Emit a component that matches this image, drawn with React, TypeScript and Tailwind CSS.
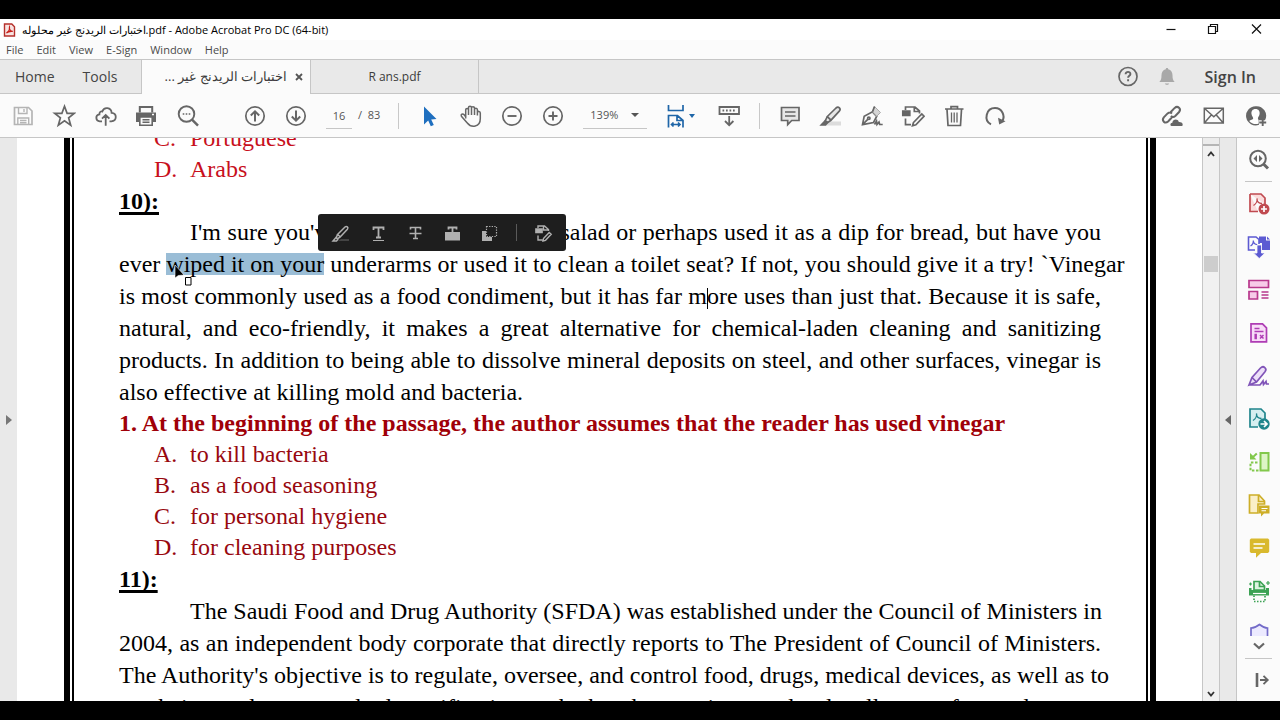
import React, { useState } from 'react'
import { clsx } from 'clsx'

type IconProps = { children: React.ReactNode; className?: string }

function Icon({ children, className }: IconProps) {
    return (
        <svg
            viewBox="0 0 24 24"
            fill="none"
            stroke="currentColor"
            strokeWidth={1.7}
            className={clsx('h-6 w-6 shrink-0', className)}
            aria-hidden="true"
        >
            {children}
        </svg>
    )
}

function IconButton({ label, children, className }: IconProps & { label: string }) {
    return (
        <button type="button" aria-label={label} className={clsx('flex h-6 w-6 shrink-0 items-center justify-center', className)}>
            <Icon>{children}</Icon>
        </button>
    )
}

function Separator() {
    return <div className="h-[26px] w-px shrink-0 bg-[#c8c8c8]" />
}

function TitleBar() {
    return (
        <header className="flex h-[21px] shrink-0 items-center bg-white pl-[3px] text-black">
            <svg viewBox="0 0 13 14" className="h-[14px] w-[13px]" fill="none" aria-hidden="true">
                <path d="M1.5 1h7.3l2.700 2.800V13h-10z" fill="#f8e4e2" stroke="#b5302b" strokeWidth="1.400" />
                <path d="M3.400 10c2.200-1.200 3.400-4 3.100-6-.8 2 1 4.300 3.300 4.400-2-.3-4.600.1-6.400 1.600z" stroke="#c8201a" strokeWidth="1.200" />
            </svg>
            <h1 className="ml-1.5 mt-px text-[11px] leading-5">اختبارات الريدنج غير محلوله.pdf - Adobe Acrobat Pro DC (64-bit)</h1>
            <div className="ml-auto flex items-center gap-[19px] pr-3">
                <IconButton label="Minimize">
                    <path d="M8.500 11.500h9" stroke="#111" strokeWidth="1.200" />
                </IconButton>
                <IconButton label="Restore">
                    <path d="M7.500 8.500h7v7h-7zM9.500 8.500v-2h7v7h-2" stroke="#111" strokeWidth="1.200" />
                </IconButton>
                <IconButton label="Close">
                    <path d="M8 6.500l9 9M17 6.500l-9 9" stroke="#111" strokeWidth="1.200" />
                </IconButton>
            </div>
        </header>
    )
}

const menus = ['File', 'Edit', 'View', 'E-Sign', 'Window', 'Help']

function MenuBar() {
    return (
        <nav className="flex h-5 shrink-0 items-center gap-[13px] border-b border-[#c6c6c6] bg-[#fbfbfb] pl-[6px] text-[11px] leading-4 text-[#4a4a4a]">
            {menus.map((m) => (
                <button key={m} type="button">{m}</button>
            ))}
        </nav>
    )
}

function TabBar() {
    return (
        <div className="flex h-[34px] shrink-0 items-stretch bg-[#e9e9e9] text-[#3c3c3c]">
            <div className="flex w-[142px] items-center gap-7 border-r border-b border-[#c6c6c6] pl-[15px] text-[14px] text-[#444]">
                <button type="button">Home</button>
                <button type="button">Tools</button>
            </div>
            <div className="flex w-[169px] items-center justify-end border-r border-[#c6c6c6] bg-[#fbfbfb] pr-[7px] text-[13px]">
                <button type="button" dir="rtl">اختبارات الريدنج غير ...</button>
                <button type="button" aria-label="Close tab" className="ml-2">
                    <svg viewBox="0 0 8 8" className="h-2 w-2" aria-hidden="true">
                        <path d="M1 1l6 6M7 1L1 7" stroke="#555" strokeWidth="1.800" />
                    </svg>
                </button>
            </div>
            <button type="button" className="w-[168px] border-r border-b border-[#c6c6c6] text-[12px]">R ans.pdf</button>
            <div className="flex flex-1 items-center justify-end border-b border-[#c6c6c6] pr-6">
                <IconButton label="Help" className="text-[#666]">
                    <circle cx="12" cy="11.500" r="9" />
                    <path d="M9.600 9.300c0-3.300 5-3 4.800-.2-.1 1.700-2.300 1.700-2.300 3.700M12.100 14.300v2" strokeWidth="1.900" />
                </IconButton>
                <IconButton label="Notifications" className="ml-[15px] text-[#a8a8a8]">
                    <path d="M12 3c.8 0 1.200.5 1.200 1.200 3 .7 4.300 3 4.300 6 0 3.500.5 5 2.200 6.800H4.300c1.700-1.800 2.200-3.300 2.200-6.800 0-3 1.300-5.300 4.300-6 0-.7.400-1.200 1.200-1.200zM9.800 18.500h4.400c-.5 1.800-3.900 1.800-4.400 0z" fill="currentColor" stroke="none" />
                </IconButton>
                <button type="button" className="ml-[26px] text-[16px] font-semibold text-[#444]">Sign In</button>
            </div>
        </div>
    )
}

function Toolbar() {
    const [page, setPage] = useState('16')

    return (
        <div className="flex h-[44px] shrink-0 items-center border-b border-[#c6c6c6] bg-[#fbfbfb] pr-3 pl-[11px] text-[#666]">
            <div className="flex gap-[17px]">
                <IconButton label="Save" className="text-[#b4b4b4]">
                    <path d="M3.500 3.500h14l3.500 3.500v13.500H3.500z" />
                    <path d="M7.500 3.500v6h8.500v-6M13 5v3M6.800 20.500v-6.500h10.900v6.500M9 16.500h6.500M9 18.700h6.500" strokeWidth="1.400" />
                </IconButton>
                <IconButton label="Star">
                    <path d="M12.500 2.300l2.600 7h7.200l-5.700 4.500 2.100 7.400-6.200-4.300-6.200 4.300 2.100-7.400L2.700 9.300h7.200z" />
                </IconButton>
                <IconButton label="Upload">
                    <path d="M9 17.300H6.800c-4.400-.3-4.700-6.200-.4-6.900-.2-2.200 1.500-3.400 2.900-2.900 1.700-5 9-4.300 9.300 1.300 5.600.2 5.600 8.300-.3 8.500H16.500M12.700 21.700v-10M9 14.700l3.700-3.700 3.700 3.700" strokeWidth="1.800" />
                </IconButton>
                <IconButton label="Print">
                    <path d="M2 8.500h20v9.500h-3.500v-4h-13v4H2z" fill="currentColor" stroke="none" />
                    <path d="M5.800 8.500v-5.600h12.400v5.600" strokeWidth="2" />
                    <path d="M5.800 13h12.400v8.200H5.800z" fill="#fbfbfb" strokeWidth="1.600" />
                    <path d="M8.500 15.800h7M8.500 18.300h7" strokeWidth="1.500" />
                    <path d="M18 10.500h2" stroke="#fff" strokeWidth="1.300" />
                </IconButton>
                <IconButton label="Find">
                    <circle cx="11.500" cy="10" r="7.800" strokeWidth="1.900" />
                    <path d="M17 15.700l6 6" strokeWidth="2.500" />
                    <path d="M7.700 10h1.600M10.700 10h1.600M13.700 10h1.600" strokeWidth="1.600" />
                </IconButton>
            </div>
            <div className="ml-[44px] flex gap-[17px]">
                <IconButton label="Previous page">
                    <circle cx="12" cy="12" r="9.200" />
                    <path d="M12 17.500V7.500M7.800 11.500L12 7.300l4.200 4.200" strokeWidth="2" />
                </IconButton>
                <IconButton label="Next page">
                    <circle cx="12" cy="12" r="9.200" />
                    <path d="M12 6.500v10M7.800 12.500l4.200 4.200 4.200-4.200" strokeWidth="2" />
                </IconButton>
            </div>
            <label className="ml-[18px] flex items-center text-[11px] text-[#555]">
                <input
                    aria-label="Page number"
                    value={page}
                    onChange={(e) => setPage(e.target.value)}
                    className="h-[26px] w-[26px] border-b border-[#c6c6c6] bg-transparent text-center outline-none"
                />
                <span className="ml-[6px]">/&nbsp; 83</span>
            </label>
            <div className="ml-[18px]"><Separator /></div>
            <div className="ml-[19px] flex gap-[17px]">
                <IconButton label="Select" className="text-[#1f6fbf]">
                    <path d="M6 2.500v18l4.200-4 2.600 5.800 3-1.300-2.600-5.600 5.300-.3z" fill="currentColor" stroke="none" />
                </IconButton>
                <IconButton label="Pan">
                    <path d="M6.700 14.500V5.800c0-1.800 2.800-1.800 2.800 0V11M9.500 6V3.500c0-1.800 3-1.800 3 0V11M12.500 4c0-1.800 3-1.700 3 .2V11M15.500 5.500c0-1.700 2.900-1.600 2.900.3V11.500M18.400 8.500c.2-1.600 2.900-1.500 2.900.4v5.600c0 9.300-9.300 9.400-13 4.500L2.400 12.200c-1-1.700 1.300-3 2.500-1.600l2.400 3" strokeWidth="1.500" />
                </IconButton>
                <IconButton label="Zoom out">
                    <circle cx="12" cy="12" r="9.200" />
                    <path d="M7.500 12h9" strokeWidth="1.900" />
                </IconButton>
                <IconButton label="Zoom in">
                    <circle cx="12" cy="12" r="9.200" />
                    <path d="M7.500 12h9M12 7.500v9" strokeWidth="1.900" />
                </IconButton>
            </div>
            <label className="relative ml-[18px] flex h-[26px] w-[64px] shrink-0 items-center border-b border-[#c6c6c6] text-[11px] text-[#555]">
                <select aria-label="Zoom level" defaultValue="139%" className="w-full appearance-none bg-transparent pl-[7px] outline-none">
                    <option>100%</option>
                    <option>139%</option>
                    <option>200%</option>
                </select>
                <svg viewBox="0 0 8 4" className="pointer-events-none absolute right-2 h-1 w-2" aria-hidden="true">
                    <path d="M0 0h8L4 4z" fill="#555" />
                </svg>
            </label>
            <button type="button" aria-label="Fit width" className="ml-[17px] flex items-center text-[#1f66a8]">
                <Icon>
                    <path d="M4.500 1v5.500h14.500V1M4.500 23.500V11.500h9l5.500 5v7M13 11.500v5h6M7.500 20.500h8.500M9.500 18.500l-2 2 2 2M14 18.500l2 2-2 2" strokeWidth="1.700" />
                </Icon>
                <svg viewBox="0 0 8 4" className="h-1 w-2" aria-hidden="true">
                    <path d="M1 0h6L4 4z" fill="currentColor" />
                </svg>
            </button>
            <IconButton label="Read mode" className="ml-[21px]">
                <path d="M2.500 3h19.500v7H2.500zM12.200 12v8.500M8 17l4.200 4.200 4.200-4.200" strokeWidth="1.800" />
                <path d="M5.500 6.500h1.700M9 6.500h1.700M12.500 6.500h1.700M16 6.500h1.700" strokeWidth="1.800" />
            </IconButton>
            <div className="ml-[18px]"><Separator /></div>
            <div className="ml-[18px] flex gap-[17px]">
                <IconButton label="Comment">
                    <path d="M3.500 3.500h17.500v13h-7.300l-4 4.200v-4.200H3.500z" fill="#e6e6e6" />
                    <path d="M7 8h10.500M7 12h10.500" strokeWidth="1.400" />
                </IconButton>
                <IconButton label="Highlight">
                    <path d="M10 17.500h12v4H6z" fill="#dcdcdc" stroke="none" />
                    <path d="M8.300 12.500L17 4c2.500-2.200 5.400.700 3.300 3.200l-8.300 9zM8.300 12.500l-2 4.200 2.200 2 3.500-2.500" fill="#e6e6e6" />
                    <path d="M6.300 16.800l2 2L6.500 21H2.300z" fill="currentColor" />
                </IconButton>
                <IconButton label="Sign">
                    <path d="M2.500 20.700l1.700-8.500 8.300-4.400 4.200 4.500-3.200 6.200zM2.500 20.700l5.500-5.500" />
                    <circle cx="8.800" cy="14.300" r="1.200" />
                    <path d="M12.500 7.800l2-5.300 6 6-3.800 3.800z" fill="#d5d5d5" stroke="#aaa" strokeWidth="1" />
                    <path d="M12.500 7.800l2-5.300M14.500 20.500l2-3.500.5 3.500 2-2.500.700 2.500h3" />
                </IconButton>
                <IconButton label="Edit">
                    <path d="M1.800 7h7v4.500h-7z" fill="currentColor" />
                    <path d="M4.500 6V3h9.500l4.500 4v2.500M13.300 3v4.500h5M4.500 14.500v6.200h5.500M12.500 18.500l8.300-8.500 2.300 2.200-8.200 8.600-3.400 1z" />
                </IconButton>
                <IconButton label="Delete">
                    <path d="M3 5h18.500M9 5V2.700h6.500V5M5 5.500l1 16h12.500l1-16" />
                    <path d="M9.500 8.500v10M12.200 8.500v10M15 8.500v10" strokeWidth="1.300" />
                </IconButton>
                <IconButton label="Rotate">
                    <path d="M8 20.300C.2 16.300 3.200 4 12 4c7 0 10.300 7.500 7.500 12.800" strokeWidth="2" />
                    <path d="M15 13.800l1.200 6.700 6.300-3.200z" fill="currentColor" stroke="none" />
                </IconButton>
            </div>
            <div className="ml-auto flex gap-[18px]">
                <IconButton label="Share link">
                    <path d="M10.500 8.200l4.200-4.300c3-2.700 7 .9 4.400 4.100l-3.800 4c-1.400 1.300-3.300 1.100-4.400 0M11.800 13.500l-3.700 4c-3.200 2.700-6.800-.9-4.300-4.100l3.800-4c1.400-1.200 3.300-1 4.400 0" strokeWidth="2" />
                    <path d="M11.500 22c-1.500-.3-1.500-3 .8-3.300.6-3.900 5.600-4.200 6.500-.7 4.100-.3 4.700 3.400 3.200 4z" fill="currentColor" stroke="none" />
                </IconButton>
                <IconButton label="Send mail">
                    <path d="M2.300 4.300h19v14.800h-19zM2.300 4.300l9.500 8.500 9.500-8.500M2.300 19.100l7-8M21.300 19.100l-7-8" strokeWidth="1.500" />
                </IconButton>
                <IconButton label="Share with others">
                    <path d="M11.500 2.200a9.600 9.600 0 1 0 3.500 18.600v-4.600h6.000A9.600 9.600 0 0 0 11.500 2.200z" fill="currentColor" stroke="none" />
                    <path d="M11.500 5c-3 0-4.400 2.300-4 5 .3 2.300 1.700 3 1.700 4.500 0 1-3 1.500-4 2.500 2 3 7 3.800 9.500 2.500v-3l-.8-2c0-1.500 1.400-2.200 1.700-4.500.4-2.700-1-5-4.100-5z" fill="#fff" stroke="none" />
                    <path d="M18.700 15v7M15.200 18.500h7" strokeWidth="1.900" />
                </IconButton>
            </div>
        </div>
    )
}

function SelectionToolbar() {
    return (
        <div className="absolute top-[76px] left-[301px] flex h-[37px] items-center gap-[13px] rounded-[3px] bg-[#1e1e1e] pr-2.5 pl-[11px] text-[#b0b0b0]">
            <IconButton label="Highlight text">
                <path d="M12 18h8v2H9z" fill="#444" stroke="none" />
                <path d="M8.500 13.500L16 6c1.700-1.500 3.800.5 2.400 2.300l-7 7.500zM8.500 13.500l-1.200 3 1.200 1.200 2.900-1.900M7 16.500L4 20h3.500l1.300-1.500z" strokeWidth="1.500" />
            </IconButton>
            <IconButton label="Underline text">
                <path d="M7.500 9V6.500h10V9M12.500 6.500v10M10 16.500h5" strokeWidth="1.800" />
                <path d="M7 19.500h11" strokeWidth="1" />
            </IconButton>
            <IconButton label="Strikethrough text">
                <path d="M7.500 8.500v-2h10v2M12.500 6.500v11M10 17.500h5M6.500 12.500h12" strokeWidth="1.600" />
            </IconButton>
            <IconButton label="Redact text">
                <path d="M8.500 8.500V6.500h8v2M12.500 6.500v5" strokeWidth="1.800" />
                <path d="M5 11h15v8.500H5z" fill="currentColor" stroke="none" />
            </IconButton>
            <IconButton label="Copy text">
                <path d="M5 10h4v6h6v4H5z" fill="currentColor" stroke="none" />
                <path d="M9.500 5.500h10v10h-10z" strokeWidth="1.200" strokeDasharray="1.300 1.300" />
            </IconButton>
            <div className="mx-0.5 h-[17px] w-px bg-[#5a5a5a]" />
            <IconButton label="Edit text">
                <path d="M4 8h6v3.500H4z" fill="currentColor" />
                <path d="M6 7V5h6.500l4 3.500v1.500M6 14.500v4.500h4.500M11.500 5v4h5M11.500 17.500l5.700-6 2 1.800-5.700 6-2.500.7z" strokeWidth="1.400" />
            </IconButton>
        </div>
    )
}

function Choices({ items, start = 0, className }: { items: string[]; start?: number; className: string }) {
    return (
        <ol className={clsx('pl-[35px] leading-[31px]', className)}>
            {items.map((item, i) => (
                <li key={item} className="flex">
                    <span className="w-9 shrink-0">{'ABCD'[start + i]}.</span>
                    <span>{item}</span>
                </li>
            ))}
        </ol>
    )
}

function Heading({ children }: { children: React.ReactNode }) {
    return (
        <h2 className="font-bold leading-8 underline decoration-[3px] underline-offset-[3px] [text-decoration-skip-ink:none]">
            {children}
        </h2>
    )
}

// a PDF keeps its own line breaks, so each line is set on its own
function Line({ children, indent, last }: { children: React.ReactNode; indent?: boolean; last?: boolean }) {
    return (
        <span className={clsx('block whitespace-nowrap', indent && 'indent-[71px]', !last && '[text-align-last:justify]')}>
            {children}
        </span>
    )
}

function Document() {
    return (
        <main className="relative min-w-0 flex-1 overflow-hidden bg-white pr-[46px] pl-[47px]">
            <div className="h-full border-x-[6px] border-black px-[2px]">
                <article className="flow-root h-full border-x-2 border-black px-[45px] font-['Liberation_Serif',serif] text-[24px] text-black">
                    <div className="-mt-[15px]">
                        <Choices items={['Portuguese', 'Arabs']} start={2} className="text-[#c8101c]" />
                        <Heading>10):</Heading>
                        <p className="-mt-px leading-8">
                            <Line indent>I'm sure you've eaten vinegar on your salad or perhaps used it as a dip for bread, but have you</Line>
                            <Line>
                                ever{' '}
                                <mark className="bg-transparent bg-[linear-gradient(#9abdd6,#9abdd6)] bg-[length:100%_22px] bg-center bg-no-repeat text-black">wiped it on your</mark>{' '}
                                underarms or used it to clean a toilet seat? If not, you should give it a try! `Vinegar
                            </Line>
                            <Line>is most commonly used as a food condiment, but it has far more uses than just that. Because it is safe,</Line>
                            <Line>natural, and eco-friendly, it makes a great alternative for chemical-laden cleaning and sanitizing</Line>
                            <Line>products. In addition to being able to dissolve mineral deposits on steel, and other surfaces, vinegar is</Line>
                            <Line last>also effective at killing mold and bacteria.</Line>
                        </p>
                        <h3 className="font-bold leading-[31px] text-[#a00008]">
                            1. At the beginning of the passage, the author assumes that the reader has used vinegar
                        </h3>
                        <Choices
                            items={['to kill bacteria', 'as a food seasoning', 'for personal hygiene', 'for cleaning purposes']}
                            className="text-[#98080f]"
                        />
                        <Heading>11):</Heading>
                        <p className="leading-8">
                            <Line indent>The Saudi Food and Drug Authority (SFDA) was established under the Council of Ministers in</Line>
                            <Line>2004, as an independent body corporate that directly reports to The President of Council of Ministers.</Line>
                            <Line>The Authority's objective is to regulate, oversee, and control food, drugs, medical devices, as well as to</Line>
                            <Line last>set their mandatory standard specifications, whether they are imported or locally manufactured.</Line>
                        </p>
                    </div>
                </article>
            </div>

            <SelectionToolbar />

            {/* text caret */}
            <div className="absolute top-[150px] left-[690px] h-[21px] w-px bg-black" />

            {/* mouse pointer */}
            <svg viewBox="0 0 20 24" className="absolute top-[126px] left-[157px] h-6 w-5" aria-hidden="true">
                <path d="M1 1v13l3.300-2.500L10 11z" fill="#000" stroke="#fff" strokeWidth="0.600" />
                <path d="M11.500 13.500h5.500v7.500h-5.500z" fill="#fff" stroke="#000" />
            </svg>
        </main>
    )
}

function ScrollBar() {
    return (
        <div className="flex w-[18px] shrink-0 flex-col items-center border-x border-[#c6c6c6] bg-[#f1f1f1]">
            <div className="h-2 w-full border-b-2 border-[#b5b5b5] bg-[#ececec]" />
            <button type="button" aria-label="Scroll up" className="mt-[5px]">
                <svg viewBox="0 0 8 6" className="h-1.5 w-2" fill="none" aria-hidden="true">
                    <path d="M1 5l3-3.500L7 5" stroke="#333" strokeWidth="1.800" />
                </svg>
            </button>
            <div className="mt-[99px] h-4 w-3.5 bg-[#cdcdcd]" />
            <button type="button" aria-label="Scroll down" className="mt-auto mb-1">
                <svg viewBox="0 0 8 6" className="h-1.5 w-2" fill="none" aria-hidden="true">
                    <path d="M1 1l3 3.500L7 1" stroke="#333" strokeWidth="1.800" />
                </svg>
            </button>
        </div>
    )
}

function ToolsPanel() {
    return (
        <aside className="flex w-[44px] shrink-0 flex-col items-center border-l border-[#c6c6c6] bg-[#fbfbfb] pt-[10px] text-[#666]">
            <IconButton label="Search tools">
                <circle cx="11" cy="10.500" r="7.800" strokeWidth="2" />
                <path d="M16.500 16l4.500 4.500" strokeWidth="3" />
                <path d="M10 7v7L6.500 10.500zM12 7v7l3.500-3.500z" fill="currentColor" stroke="none" />
            </IconButton>
            <div className="mt-[9px] h-px w-[27px] shrink-0 bg-[#c6c6c6]" />
            <div className="mt-[10px] flex h-[450px] shrink-0 flex-col gap-[19px] overflow-hidden">
                <IconButton label="Create PDF" className="text-[#c04a50]">
                    <path d="M3 2h11l4 4v6M11 19.500H3V2" fill="#fbdcdc" />
                    <path d="M6.500 13.500c3-2 4-4.500 3.500-7 0 3 2 5 5 5" strokeWidth="1.300" />
                    <circle cx="17" cy="17" r="5.500" fill="currentColor" stroke="none" />
                    <path d="M17 14v6M14 17h6" stroke="#fff" />
                </IconButton>
                <IconButton label="Export PDF" className="text-[#5c5ad2]">
                    <path d="M12 1.500h7v4h4v9.500h-8v-7h-3zM20 1.500l3 3h-3z" fill="currentColor" stroke="none" />
                    <path d="M8 15H1.500V2h7.500l3 2.500V9" strokeWidth="1.600" />
                    <path d="M3.500 11c2.500-1.500 3-3 2.800-5.500.2 3 1.700 4 4 4.200" strokeWidth="1.200" />
                    <path d="M10 10h4.500v8h3.500L12.200 23.500 6.500 18H10z" fill="currentColor" stroke="#fbfbfb" strokeWidth="0.800" />
                </IconButton>
                <IconButton label="Organize pages" className="text-[#b8388c]">
                    <path d="M2 2.500h19.500v7H2zM2 13.500h8.500v7.500H2z" fill="#f7cbe8" />
                    <path d="M14.500 14h7M14.500 17h7M14.500 20h7" strokeWidth="1.300" />
                </IconButton>
                <IconButton label="Prepare form" className="text-[#ae3cb4]">
                    <path d="M4 2.800h11.500l4 4v14H4z" fill="#f8dcf8" />
                    <path d="M7.500 7.500h5M7.500 10.500h9" strokeWidth="1.300" />
                    <path d="M8.200 13.500h1v4h-1zM13 14l3.500 3.500M16.500 14L13 17.500" strokeWidth="1.500" />
                </IconButton>
                <IconButton label="Fill and sign" className="text-[#8054b8]">
                    <path d="M2 21l3-7.500L13.500 4c3-3 7 .5 4.500 3.700L9.500 18zM5 13.500L9.500 18M2 21h11l3-4 .5 3.500 2.500-3 .5 2.500h2.500" fill="#ecdff8" />
                </IconButton>
                <IconButton label="Send for signature" className="text-[#20858c]">
                    <path d="M11 20H3V2h11l4 4v6" fill="#d6eff0" />
                    <path d="M6 13.500c3-2 4-4.500 3.500-7 0 3 2 5 5 5" strokeWidth="1.300" />
                    <circle cx="17" cy="17" r="5.700" fill="currentColor" stroke="none" />
                    <path d="M13.500 17h6M17 14l3 3-3 3" stroke="#fff" />
                </IconButton>
                <IconButton label="Compress" className="text-[#82c84c]">
                    <path d="M13.500 3h8v17.500h-8z" fill="#ddf5c6" strokeWidth="2" />
                    <path d="M10.500 12.500H3.500v8h8" strokeDasharray="2.500 1.600" strokeWidth="2" />
                    <path d="M3 3v6.500h6.500l-2.300-2.300 3.300-3-1.400-1.400-3.100 3z" fill="currentColor" stroke="none" />
                </IconButton>
                <IconButton label="Add comments to file" className="text-[#cdae28]">
                    <path d="M11 20H2.500V2H12l5.500 6v3H11z" fill="#faefc8" />
                    <path d="M11.500 2v6.500h6" />
                    <path d="M12 12.500h10.500v8H17l-3 3v-3h-2z" fill="currentColor" stroke="none" />
                    <path d="M14.500 15.500h6M14.500 17.800h4.500" stroke="#fff" strokeWidth="1.100" />
                </IconButton>
                <IconButton label="Comment tool" className="text-[#d9b92e]">
                    <path d="M4 2.500h17l1.200 1.200v12L21 17h-7l-5 4.800V17H4l-1.200-1.300v-12z" fill="currentColor" stroke="none" />
                    <path d="M6.500 8h11.500M6.500 12h9" stroke="#fff" strokeWidth="1.500" />
                </IconButton>
                <IconButton label="Scan and OCR" className="text-[#3ca254]">
                    <path d="M7 11V2.500h6l4.500 4.500v4z" fill="#dcf4e0" />
                    <path d="M12.500 2.500V7.500h5" />
                    <path d="M2 9h2.500v2H19V9h3v7.500H2z" fill="currentColor" stroke="none" />
                    <path d="M6 14.500h13" stroke="#fff" strokeWidth="1.200" />
                    <path d="M7 16.500v6h11v-6" strokeDasharray="1.500 1.500" />
                    <path d="M2 5h3M3.500 3.500v3M19 4h4M21 2v4" strokeWidth="1.200" />
                </IconButton>
                <IconButton label="Protect" className="text-[#736bc8]">
                    <path d="M4 14V6c3.500 0 6-1.500 8.500-3.500C15 4.500 17.500 6 20.500 6v8" fill="#eceaff" />
                </IconButton>
            </div>
            <button type="button" aria-label="More tools">
                <svg viewBox="0 0 12 8" className="h-2 w-3" fill="none" aria-hidden="true">
                    <path d="M1 1.500l5 4.500 5-4.500" stroke="currentColor" strokeWidth="2.200" />
                </svg>
            </button>
            <div className="mt-2 h-px w-[27px] shrink-0 bg-[#c6c6c6]" />
            <IconButton label="Collapse panel" className="mt-[9px]">
                <path d="M10 5v14" strokeWidth="2.600" />
                <path d="M13 12h7.500M16.500 7.800l4.200 4.200-4.200 4.200" strokeWidth="1.900" />
            </IconButton>
        </aside>
    )
}

export default function App() {
    return (
        <div className="flex h-screen flex-col overflow-hidden bg-black py-[19px] font-['Open_Sans','Noto_Sans',sans-serif]">
            <TitleBar />
            <MenuBar />
            <TabBar />
            <Toolbar />
            <div className="flex min-h-0 flex-1">
                <button type="button" aria-label="Open navigation pane" className="flex w-[17px] shrink-0 items-center justify-center bg-[#e9e9e9]">
                    <svg viewBox="0 0 6 10" className="h-2.5 w-1.5" aria-hidden="true">
                        <path d="M0 0v10l6-5z" fill="#777" />
                    </svg>
                </button>
                <Document />
                <ScrollBar />
                <button type="button" aria-label="Close tools pane" className="flex w-4 shrink-0 items-center justify-center bg-[#e9e9e9]">
                    <svg viewBox="0 0 6 10" className="h-2.5 w-1.5" aria-hidden="true">
                        <path d="M6 0v10L0 5z" fill="#666" />
                    </svg>
                </button>
                <ToolsPanel />
            </div>
        </div>
    )
}
